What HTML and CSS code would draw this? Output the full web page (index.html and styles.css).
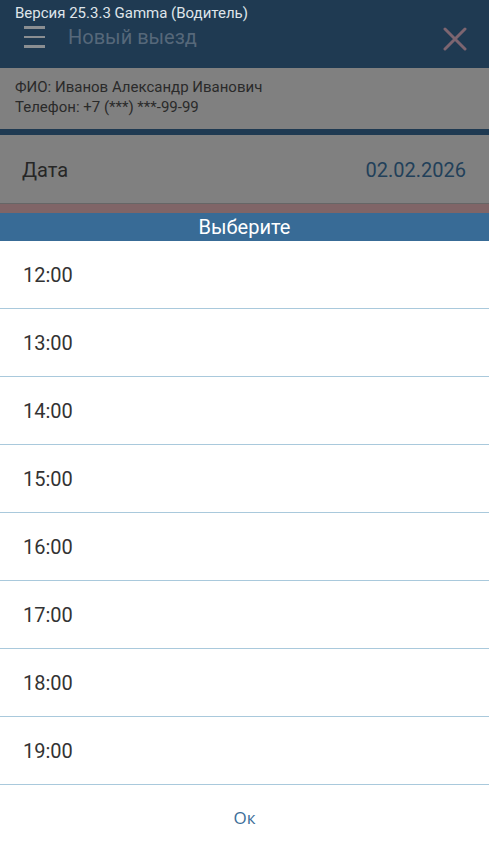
FILE: index.html
```html
<!DOCTYPE html>
<html lang="ru">
<head>
    <meta charset="UTF-8">
    <meta name="viewport" content="width=device-width, initial-scale=1.0">
    <title>Новый выезд</title>
    <link rel="stylesheet" href="styles.css">
</head>
<body>
    <div class="page">
        <header class="app-bar">
            <div class="version">Версия 25.3.3 Gamma (Водитель)</div>
            <div class="toolbar">
                <span class="menu-icon"><i></i><i></i><i></i></span>
                <span class="title">Новый выезд</span>
                <svg class="close-icon" width="24" height="24" viewBox="0 0 24 24">
                    <path d="M2 2 L22 22 M22 2 L2 22" stroke="#7d6570" stroke-width="3" stroke-linecap="round"/>
                </svg>
            </div>
        </header>

        <div class="driver-info">
            <div>ФИО: Иванов Александр Иванович</div>
            <div>Телефон: +7 (***) ***-99-99</div>
        </div>

        <div class="date-row">
            <span class="label">Дата</span>
            <span class="value">02.02.2026</span>
        </div>
        <div class="alert-strip"></div>
    </div>

    <!-- Time picker dialog -->
    <div class="dialog">
        <div class="dialog-title">Выберите</div>
        <ul class="time-list">
            <li>12:00</li>
            <li>13:00</li>
            <li>14:00</li>
            <li>15:00</li>
            <li>16:00</li>
            <li>17:00</li>
            <li>18:00</li>
            <li>19:00</li>
        </ul>
        <button class="ok-button">Ок</button>
    </div>
</body>
</html>
```

FILE: styles.css
```css
/* Basic reset and font setup */
* {
    margin: 0;
    padding: 0;
    box-sizing: border-box;
}
body {
    font-family: Roboto, "Liberation Sans", sans-serif;
    background-color: #ffffff;
    color: #333;
    width: 489px;
    height: 853px;
    overflow: hidden;
}

/* Dimmed page behind the dialog */
.app-bar {
    height: 68px;
    background-color: #1f3a52;
    padding: 4px 0 0 15px;
}
.version {
    font-size: 15px;
    line-height: 18px;
    color: #dfe5ea;
}
.toolbar {
    display: flex;
    align-items: center;
    height: 30px;
    padding-right: 22px;
}
.menu-icon {
    display: flex;
    flex-direction: column;
    gap: 7px;
    width: 21px;
    margin-left: 9px;
}
.menu-icon i {
    display: block;
    height: 2.5px;
    background-color: #8a8e92;
}
.title {
    flex: 1;
    margin-left: 23px;
    font-size: 20px;
    color: #56687a;
}
.close-icon {
    margin-top: 4px;
}

.driver-info {
    background-color: #808080;
    border-bottom: 6px solid #1f3a52;
    padding: 9px 15px 0;
    height: 67px;
    font-size: 15px;
    line-height: 20px;
    color: #2a2a2a;
}

.date-row {
    display: flex;
    justify-content: space-between;
    align-items: center;
    height: 69px;
    padding: 2px 23px 0 22px;
    background-color: #808080;
    border-bottom: 1px solid #666;
    font-size: 20px;
}
.date-row .label {
    color: #262626;
}
.date-row .value {
    color: #22405a;
}
.alert-strip {
    height: 9px;
    background-color: #806567;
}

/* Dialog */
.dialog {
    position: fixed;
    left: 0;
    right: 0;
    bottom: 0;
    background-color: #ffffff;
}
.dialog-title {
    height: 28px;
    line-height: 28px;
    text-align: center;
    background-color: #386b96;
    color: #ffffff;
    font-size: 20px;
}
.time-list {
    list-style: none;
}
.time-list li {
    height: 68px;
    padding: 2px 0 0 23px;
    line-height: 65px;
    border-bottom: 1px solid #a9c9dc;
    font-size: 20px;
    color: #333;
}
.ok-button {
    display: block;
    width: 100%;
    height: 68px;
    padding-bottom: 3px;
    border: none;
    background: none;
    font-family: "Open Sans", "Noto Sans", sans-serif;
    font-size: 17px;
    color: #3b6e99;
}
```
